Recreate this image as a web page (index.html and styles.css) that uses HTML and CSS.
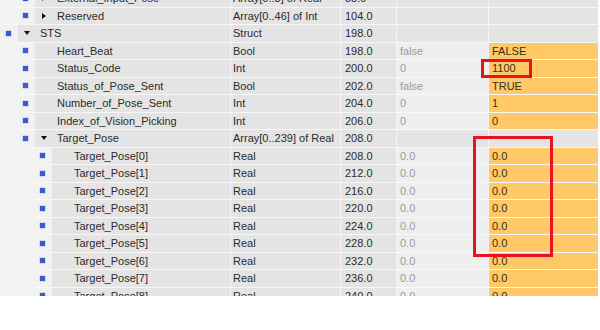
FILE: index.html
```html
<!DOCTYPE html>
<html lang="en">
<head>
  <meta charset="UTF-8">
  <title>DB - STS</title>
  <link rel="stylesheet" href="styles.css">
</head>
<body>
  <div class="db-view">
    <div class="db-table">
      <div class="row struct">
        <div class="cell name lvl1"><span class="indent"><i class="mark"></i></span><span class="tree"><i class="tri closed"></i></span>External_Input_Pose</div>
        <div class="cell type">Array[0..3] of Real</div>
        <div class="cell offset">88.0</div>
        <div class="cell start"></div>
        <div class="cell monitor"></div>
      </div>
      <div class="row struct">
        <div class="cell name lvl1"><span class="indent"><i class="mark"></i></span><span class="tree"><i class="tri closed"></i></span>Reserved</div>
        <div class="cell type">Array[0..46] of Int</div>
        <div class="cell offset">104.0</div>
        <div class="cell start"></div>
        <div class="cell monitor"></div>
      </div>
      <div class="row struct">
        <div class="cell name lvl0"><span class="indent"><i class="mark"></i></span><span class="tree"><i class="tri open"></i></span>STS</div>
        <div class="cell type">Struct</div>
        <div class="cell offset">198.0</div>
        <div class="cell start"></div>
        <div class="cell monitor"></div>
      </div>
      <div class="row">
        <div class="cell name lvl1"><span class="indent"><i class="mark"></i></span><span class="tree"></span>Heart_Beat</div>
        <div class="cell type">Bool</div>
        <div class="cell offset">198.0</div>
        <div class="cell start">false</div>
        <div class="cell monitor">FALSE</div>
      </div>
      <div class="row">
        <div class="cell name lvl1"><span class="indent"><i class="mark"></i></span><span class="tree"></span>Status_Code</div>
        <div class="cell type">Int</div>
        <div class="cell offset">200.0</div>
        <div class="cell start">0</div>
        <div class="cell monitor">1100</div>
      </div>
      <div class="row">
        <div class="cell name lvl1"><span class="indent"><i class="mark"></i></span><span class="tree"></span>Status_of_Pose_Sent</div>
        <div class="cell type">Bool</div>
        <div class="cell offset">202.0</div>
        <div class="cell start">false</div>
        <div class="cell monitor">TRUE</div>
      </div>
      <div class="row">
        <div class="cell name lvl1"><span class="indent"><i class="mark"></i></span><span class="tree"></span>Number_of_Pose_Sent</div>
        <div class="cell type">Int</div>
        <div class="cell offset">204.0</div>
        <div class="cell start">0</div>
        <div class="cell monitor">1</div>
      </div>
      <div class="row">
        <div class="cell name lvl1"><span class="indent"><i class="mark"></i></span><span class="tree"></span>Index_of_Vision_Picking</div>
        <div class="cell type">Int</div>
        <div class="cell offset">206.0</div>
        <div class="cell start">0</div>
        <div class="cell monitor">0</div>
      </div>
      <div class="row struct">
        <div class="cell name lvl1"><span class="indent"><i class="mark"></i></span><span class="tree"><i class="tri open"></i></span>Target_Pose</div>
        <div class="cell type">Array[0..239] of Real</div>
        <div class="cell offset">208.0</div>
        <div class="cell start"></div>
        <div class="cell monitor"></div>
      </div>
      <div class="row">
        <div class="cell name lvl2"><span class="indent"><i class="mark"></i></span><span class="tree"></span>Target_Pose[0]</div>
        <div class="cell type">Real</div>
        <div class="cell offset">208.0</div>
        <div class="cell start">0.0</div>
        <div class="cell monitor">0.0</div>
      </div>
      <div class="row">
        <div class="cell name lvl2"><span class="indent"><i class="mark"></i></span><span class="tree"></span>Target_Pose[1]</div>
        <div class="cell type">Real</div>
        <div class="cell offset">212.0</div>
        <div class="cell start">0.0</div>
        <div class="cell monitor">0.0</div>
      </div>
      <div class="row">
        <div class="cell name lvl2"><span class="indent"><i class="mark"></i></span><span class="tree"></span>Target_Pose[2]</div>
        <div class="cell type">Real</div>
        <div class="cell offset">216.0</div>
        <div class="cell start">0.0</div>
        <div class="cell monitor">0.0</div>
      </div>
      <div class="row">
        <div class="cell name lvl2"><span class="indent"><i class="mark"></i></span><span class="tree"></span>Target_Pose[3]</div>
        <div class="cell type">Real</div>
        <div class="cell offset">220.0</div>
        <div class="cell start">0.0</div>
        <div class="cell monitor">0.0</div>
      </div>
      <div class="row">
        <div class="cell name lvl2"><span class="indent"><i class="mark"></i></span><span class="tree"></span>Target_Pose[4]</div>
        <div class="cell type">Real</div>
        <div class="cell offset">224.0</div>
        <div class="cell start">0.0</div>
        <div class="cell monitor">0.0</div>
      </div>
      <div class="row">
        <div class="cell name lvl2"><span class="indent"><i class="mark"></i></span><span class="tree"></span>Target_Pose[5]</div>
        <div class="cell type">Real</div>
        <div class="cell offset">228.0</div>
        <div class="cell start">0.0</div>
        <div class="cell monitor">0.0</div>
      </div>
      <div class="row">
        <div class="cell name lvl2"><span class="indent"><i class="mark"></i></span><span class="tree"></span>Target_Pose[6]</div>
        <div class="cell type">Real</div>
        <div class="cell offset">232.0</div>
        <div class="cell start">0.0</div>
        <div class="cell monitor">0.0</div>
      </div>
      <div class="row">
        <div class="cell name lvl2"><span class="indent"><i class="mark"></i></span><span class="tree"></span>Target_Pose[7]</div>
        <div class="cell type">Real</div>
        <div class="cell offset">236.0</div>
        <div class="cell start">0.0</div>
        <div class="cell monitor">0.0</div>
      </div>
      <div class="row">
        <div class="cell name lvl2"><span class="indent"><i class="mark"></i></span><span class="tree"></span>Target_Pose[8]</div>
        <div class="cell type">Real</div>
        <div class="cell offset">240.0</div>
        <div class="cell start">0.0</div>
        <div class="cell monitor">0.0</div>
      </div>
    </div>

    <!-- highlight boxes drawn over the monitor column -->
    <div class="highlight hl-status"></div>
    <div class="highlight hl-pose"></div>
  </div>
</body>
</html>
```

FILE: styles.css
```css
* {
  margin: 0;
  padding: 0;
  box-sizing: border-box;
}

body {
  background: #ffffff;
  font-family: "Liberation Sans", Arial, sans-serif;
  font-size: 11px;
  color: #2b2b2b;
}

.db-view {
  position: relative;
  width: 600px;
  height: 330px;
}

.db-table {
  height: 296px;
  overflow: hidden;
}

.row {
  display: grid;
  grid-template-columns: 231px 110px 56px 92px 109px;
  height: 17.5px;
  line-height: 16.5px;
  border-bottom: 1px solid #f7f7f7;
}

.row:first-child {
  margin-top: -9.8px;
}

.cell {
  background: #e4e4e4;
  border-right: 1px solid #f4f4f4;
  white-space: nowrap;
  overflow: hidden;
}

.cell.monitor {
  border-right: none;
}

.type {
  padding-left: 2px;
}

.offset {
  padding-left: 4px;
}

.start {
  background: #efefef;
  color: #9a9a9a;
  padding-left: 3px;
}

.monitor {
  background: #fec966;
  color: #3a2f1c;
  padding-left: 3px;
}

.struct .start,
.struct .monitor {
  background: #e4e4e4;
}

/* name column: light indent strip, then tree toggle and label */
.name {
  display: flex;
  align-items: center;
}

.indent {
  align-self: stretch;
  flex: none;
  display: flex;
  align-items: center;
  justify-content: flex-end;
  padding-right: 7px;
  background: #f2f2f2;
}

.lvl0 .indent { width: 18px; }
.lvl1 .indent { width: 35px; }
.lvl2 .indent { width: 52px; }

.mark {
  width: 5px;
  height: 5px;
  background: #3d5ac9;
  box-shadow: 0 0 0 0.5px rgba(120, 140, 220, 0.5);
}

.tree {
  flex: none;
  width: 22px;
  height: 100%;
  display: flex;
  align-items: center;
  padding-left: 6px;
}

.tri {
  width: 0;
  height: 0;
}

.tri.open {
  border-left: 3.5px solid transparent;
  border-right: 3.5px solid transparent;
  border-top: 4px solid #111;
}

.tri.closed {
  margin-left: 1px;
  border-top: 3.5px solid transparent;
  border-bottom: 3.5px solid transparent;
  border-left: 4px solid #111;
}

.highlight {
  position: absolute;
  border: 3px solid #e5141e;
}

.hl-status {
  left: 481px;
  top: 59px;
  width: 51px;
  height: 19px;
}

.hl-pose {
  left: 473px;
  top: 136px;
  width: 80px;
  height: 121px;
}
```
